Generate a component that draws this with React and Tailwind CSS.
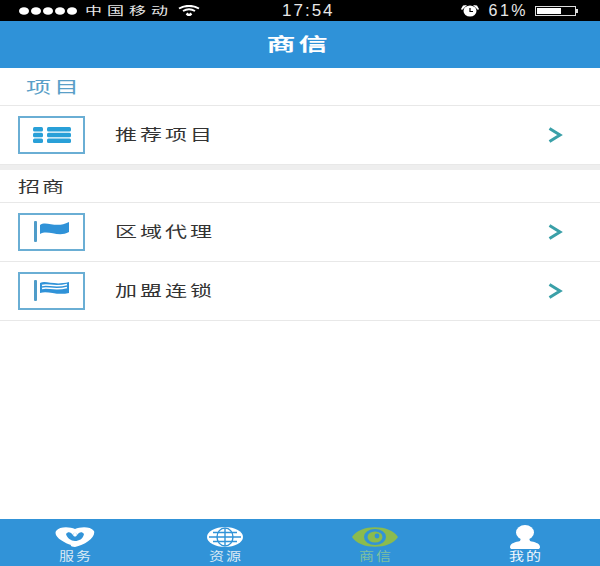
const cjk = "font-['Noto_Sans_CJK_SC','Liberation_Sans',sans-serif]";

function ListIcon() {
  return (
    <svg width="38" height="16" viewBox="0 0 38 16" fill="#29a0d8">
      <rect x="0" y="0" width="10" height="4.4" rx="1.5" />
      <rect x="14" y="0" width="24" height="4.4" rx="1.5" />
      <rect x="0" y="5.8" width="10" height="4.4" rx="1.5" />
      <rect x="14" y="5.8" width="24" height="4.4" rx="1.5" />
      <rect x="0" y="11.6" width="10" height="4.4" rx="1.5" />
      <rect x="14" y="11.6" width="24" height="4.4" rx="1.5" />
    </svg>
  );
}

function FlagIcon() {
  return (
    <svg width="36" height="22" viewBox="0 0 36 22" fill="#2f92d8">
      <rect x="0" y="0" width="3" height="21" rx="1" fill="#4f9cc9" />
      <path d="M6 4 C12 -1 22 8 35 1 L35 11 C24 17 14 8 6 13 Z" />
    </svg>
  );
}

function FlagOutlineIcon() {
  return (
    <svg width="36" height="22" viewBox="0 0 36 22" fill="#2f92d8">
      <rect x="0" y="0" width="3" height="21" rx="1" fill="#4f9cc9" />
      <path d="M6 3 C12 0 20 6 35 2 L35 13 C22 16 14 10 6 13 Z" />
      <path d="M8 5.5 C14 3.5 20 8 33 4.5 M8 8.5 C14 6.5 20 11 33 7.5" stroke="#ffffff" strokeWidth="1.5" fill="none" />
    </svg>
  );
}

function Chevron() {
  return (
    <svg width="15" height="16" viewBox="0 0 15 16" fill="none" stroke="#3aa0a8" strokeWidth="3">
      <path d="M1.5 1.5 L12 8 L1.5 14.5" />
    </svg>
  );
}

function Row({ icon, label, height }) {
  return (
    <div className={`flex items-center border-b border-[#e8e8e8] pl-[18px] pr-[37px] ${height}`}>
      <div className="flex h-[38px] w-[67px] items-center justify-center border-2 border-[#6aaed4]">
        {icon}
      </div>
      <span className={`ml-[30px] flex-1 -translate-y-[2px] scale-y-[0.68] text-[22px] leading-none tracking-[3px] text-[#333333] ${cjk}`}>{label}</span>
      <Chevron />
    </div>
  );
}

function Tab({ icon, label, color }) {
  return (
    <div className="flex flex-1 flex-col items-center pt-[6px]">
      <div className="flex h-[24px] items-center justify-center">{icon}</div>
      <span className={`-translate-y-[1px] pl-[2px] scale-y-[0.8] text-[15px] leading-[16px] tracking-[2px] ${color} ${cjk}`}>{label}</span>
    </div>
  );
}

export default function App() {
  return (
    <div className="flex h-[566px] w-[600px] flex-col bg-white">
      {/* status bar */}
      <div className="flex h-[21px] items-center bg-black pl-[19px] text-[#e8e8e8]">
        <div className="flex gap-[2px]">
          {[0, 1, 2, 3, 4].map((i) => (
            <div key={i} className="h-[10px] w-[10px] scale-y-75 rounded-full bg-white" />
          ))}
        </div>
        <span className={`ml-[8px] -translate-y-[1px] scale-y-[0.68] text-[17px] leading-none tracking-[5px] ${cjk}`}>中国移动</span>
        <svg className="ml-[5px]" width="22" height="11" viewBox="0 0 22 11" fill="none" stroke="#ffffff">
          <path d="M1 3.5 C7 0 15 0 21 3.5" strokeWidth="2" />
          <path d="M5 6 C8.5 4 13.5 4 17 6" strokeWidth="2" />
          <path d="M8.5 8.5 L11 10.5 L13.5 8.5" strokeWidth="2.5" />
        </svg>
        <span className="ml-[82px] font-['Liberation_Sans',sans-serif] text-[17px] leading-none tracking-[2px]">17:54</span>
        <svg className="ml-[125px]" width="20" height="13" viewBox="0 0 20 13">
          <ellipse cx="10" cy="7" rx="6.5" ry="5.5" fill="#ffffff" />
          <path d="M10 4 V7.5 H13" stroke="#000000" strokeWidth="1.2" fill="none" />
          <path d="M1 5 L3 1.5 L7 1 L2 6 Z M19 5 L17 1.5 L13 1 L18 6 Z" fill="#ffffff" />
        </svg>
        <span className="ml-[9px] font-['Liberation_Sans',sans-serif] text-[16px] leading-none tracking-[2.5px]">61%</span>
        <div className="ml-[7px] flex h-[10px] w-[41px] items-center border border-[#dddddd] p-[1px]">
          <div className="h-full w-[24px] bg-white" />
        </div>
        <div className="h-[4px] w-[2px] bg-[#dddddd]" />
      </div>

      {/* header */}
      <div className="flex h-[47px] items-center justify-center bg-[#2f92d8]">
        <span className={`-translate-y-[1px] scale-y-[0.62] pr-[3px] text-[29px] font-bold leading-none tracking-[3px] text-white ${cjk}`}>商信</span>
      </div>

      {/* 项目 */}
      <div className="flex h-[38px] items-center border-b border-[#e8e8e8] pl-[26px]">
        <span className={`scale-y-[0.64] text-[25px] leading-none tracking-[3px] text-[#5a9fc8] ${cjk}`}>项目</span>
      </div>
      <Row icon={<ListIcon />} label="推荐项目" height="h-[59px]" />
      <div className="h-[5px] bg-[#eeeeee]" />

      {/* 招商 */}
      <div className="flex h-[33px] items-center border-b border-[#e8e8e8] pl-[18px]">
        <span className={`-translate-y-[1px] scale-y-[0.65] text-[22px] leading-none tracking-[2px] text-[#333333] ${cjk}`}>招商</span>
      </div>
      <Row icon={<FlagIcon />} label="区域代理" height="h-[59px]" />
      <Row icon={<FlagOutlineIcon />} label="加盟连锁" height="h-[59px]" />

      <div className="flex-1" />

      {/* tab bar */}
      <div className="flex h-[47px] bg-[#3193d8]">
        <Tab
          color="text-[#dbeaf5]"
          label="服务"
          icon={
            <svg width="40" height="20" viewBox="0 0 40 20">
              <path d="M1 4 C5 -1 15 0 20 2 C25 0 35 -1 39 4 C41 10 30 18 20 20 C17 20 15 19 16 18 C10 16 -2 10 1 4 Z" fill="#ffffff" />
              <path d="M11 7 C13 4 16 5 18 8 C19 5 21 5 22 8 C24 5 27 4 29 7 C28 12 24 14 20 14 C16 14 12 11 11 7 Z" fill="#3193d8" />
              <path d="M18 8 C19 10 21 10 22 8 C21 5 19 5 18 8 Z" fill="#ffffff" />
            </svg>
          }
        />
        <Tab
          color="text-[#dbeaf5]"
          label="资源"
          icon={
            <svg width="36" height="20" viewBox="0 0 36 20" fill="none">
              <ellipse cx="18" cy="10" rx="18" ry="10" fill="#ffffff" />
              <ellipse cx="18" cy="10" rx="8" ry="9" stroke="#3193d8" strokeWidth="1.4" />
              <path d="M18 1 V19 M2 10 H34 M6 5.5 H30 M6 14.5 H30" stroke="#3193d8" strokeWidth="1.4" />
            </svg>
          }
        />
        <Tab
          color="text-[#7fc0a0]"
          label="商信"
          icon={
            <svg width="46" height="20" viewBox="0 0 46 20">
              <path d="M0 10 C8 -3 38 -3 46 10 C38 23 8 23 0 10 Z" fill="#8bbb4e" />
              <ellipse cx="23" cy="10" rx="11" ry="8" fill="#3193d8" />
              <ellipse cx="23" cy="10" rx="7.5" ry="5.5" fill="#8bbb4e" />
              <circle cx="25" cy="9" r="2.4" fill="#3193d8" />
            </svg>
          }
        />
        <Tab
          color="text-[#f2f8fc]"
          label="我的"
          icon={
            <svg width="32" height="24" viewBox="0 0 32 24" fill="#ffffff">
              <ellipse cx="16" cy="7.5" rx="9" ry="7.5" />
              <path d="M12 13 L20 13 L21 16 C25 17 31 18 31 22 C31 23.5 30 24 29 24 H3 C2 24 1 23.5 1 22 C1 18 7 17 11 16 Z" />
            </svg>
          }
        />
      </div>
    </div>
  );
}
